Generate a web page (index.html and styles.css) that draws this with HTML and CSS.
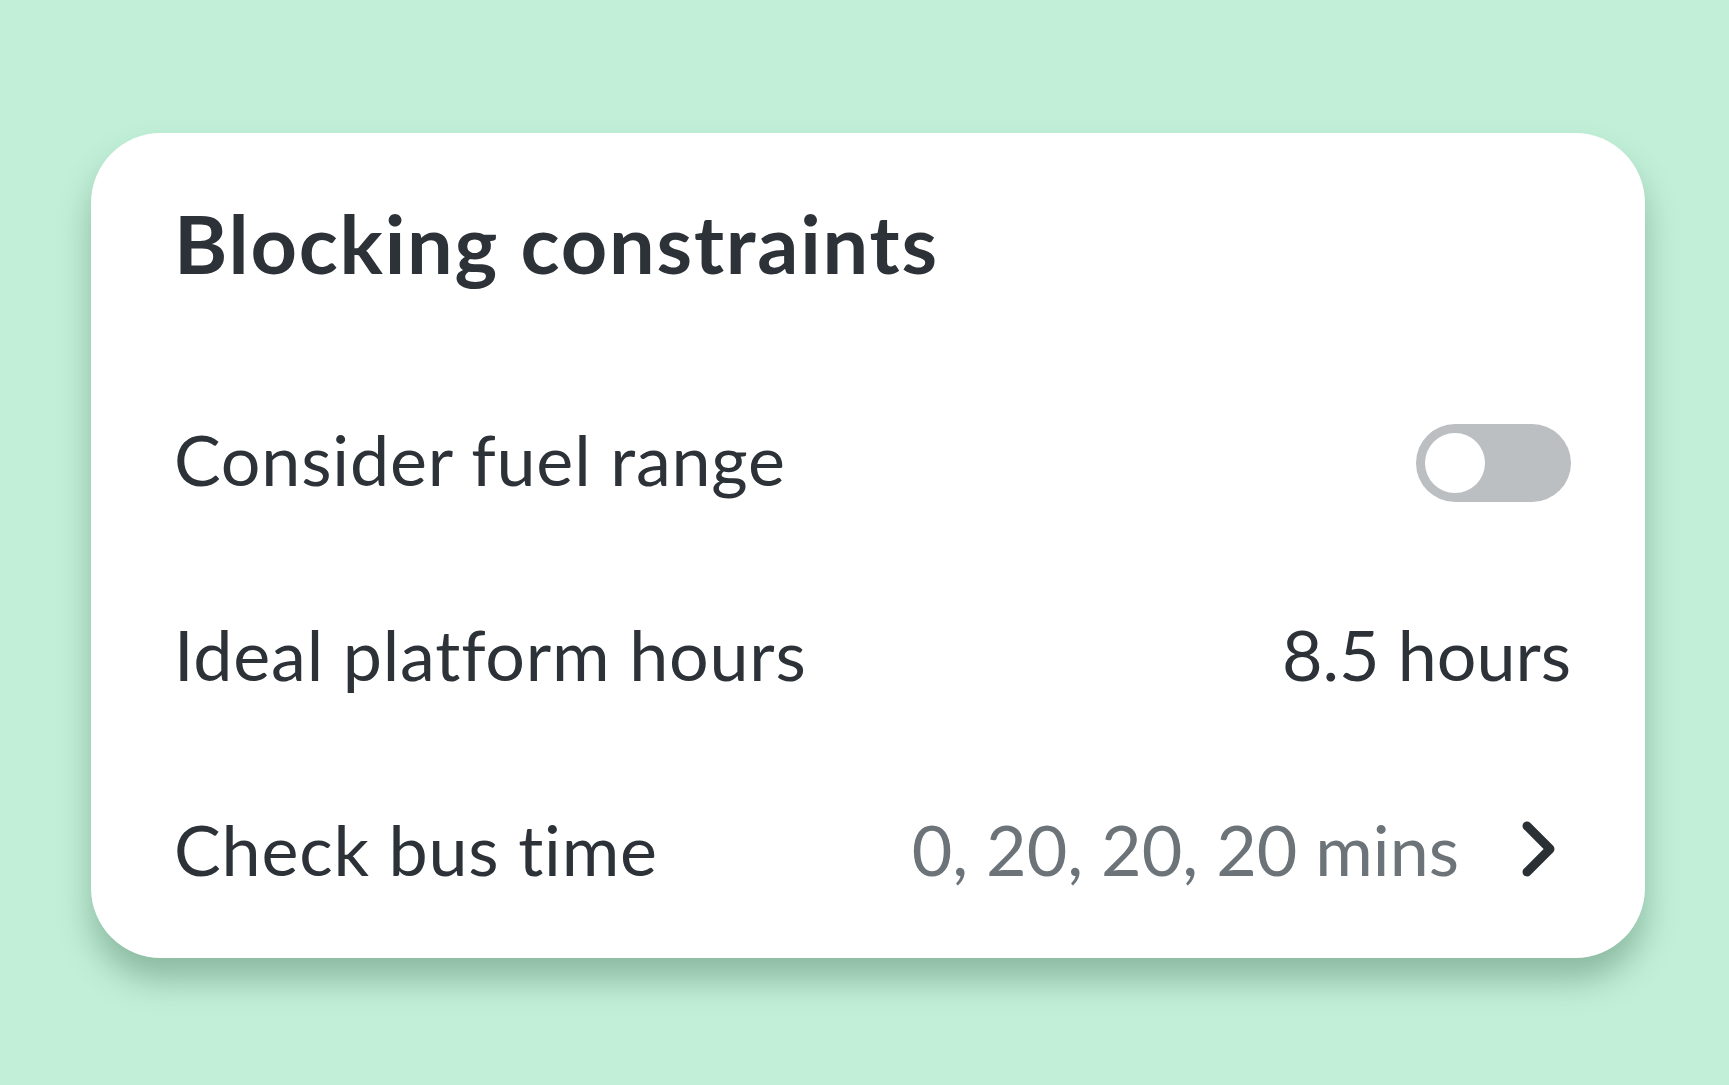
FILE: index.html
```html
<!DOCTYPE html>
<html lang="en">
<head>
<meta charset="utf-8">
<title>Blocking constraints</title>
<link rel="stylesheet" href="styles.css">
</head>
<body>
<main class="stage">
  <section class="card">
    <h1 class="card-title">Blocking constraints</h1>
    <div class="row">
      <span class="row-label">Consider fuel range</span>
      <span class="toggle" role="switch" aria-checked="false"><span class="toggle-knob"></span></span>
    </div>
    <div class="row">
      <span class="row-label">Ideal platform hours</span>
      <span class="row-value">8.5 hours</span>
    </div>
    <div class="row">
      <span class="row-label">Check bus time</span>
      <span class="row-link">
        <span class="row-value muted">0, 20, 20, 20 mins</span>
        <svg class="chevron" viewBox="0 0 36 56" width="36" height="56" aria-hidden="true">
          <path d="M6 5 L29 28 L6 51" fill="none" stroke="#2b3035" stroke-width="9" stroke-linecap="round" stroke-linejoin="round"/>
        </svg>
      </span>
    </div>
  </section>
</main>
</body>
</html>
```
FILE: styles.css
```css
* { box-sizing: border-box; }
html, body {
  margin: 0;
  padding: 0;
  background: #c2efd8;
}
body {
  font-family: "Lato", "Noto Sans", sans-serif;
  color: #2c3237;
}
.stage {
  width: 1729px;
  height: 1085px;
  padding: 133px 0 0 91px;
}
.card {
  width: 1554px;
  height: 825px;
  background: #ffffff;
  border-radius: 70px;
  box-shadow: 0 22px 32px rgba(40, 90, 60, 0.35);
  padding: 0 74px 0 83px;
  display: flex;
  flex-direction: column;
}
.card-title {
  margin: 0;
  height: 228px;
  display: flex;
  align-items: center;
  font-size: 81px;
  font-weight: 700;
  line-height: 1;
  letter-spacing: 1.8px;
  padding-bottom: 10px;
}
.row {
  height: 195px;
  display: flex;
  align-items: center;
  justify-content: space-between;
}
.row-label {
  font-size: 70px;
  line-height: 1;
  letter-spacing: 0.8px;
}
.row-value {
  font-size: 70px;
  line-height: 1;
}
.row-value.muted {
  color: #6c7479;
}
.row-link {
  display: flex;
  align-items: center;
  gap: 62px;
}
.chevron {
  display: block;
  margin-right: 14px;
}
.toggle {
  width: 155px;
  height: 78px;
  margin-top: 8px;
  border-radius: 39px;
  background: #bbbfc2;
  padding: 9px;
  display: flex;
  align-items: center;
}
.toggle-knob {
  width: 60px;
  height: 60px;
  border-radius: 50%;
  background: #ffffff;
}
```
